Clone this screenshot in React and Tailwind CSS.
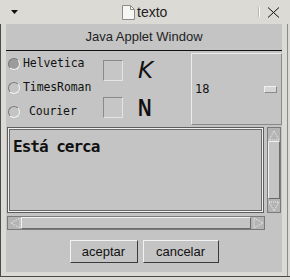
import React from "react";

// Java applet window inside a GTK-ish frame (290x280)

const mono = "font-['DejaVu_Sans_Mono','Liberation_Mono',monospace]";

function Radio({ label, selected, gap }) {
    return (
        <div className="h-[24px] flex items-center">
            <span
                className={`w-[12px] h-[12px] rounded-full border border-t-[#7a7a7a] border-l-[#7a7a7a] border-b-[#f2f2f2] border-r-[#f2f2f2] ${selected ? "bg-[#9c9c9c]" : "bg-[#c4c4c4]"}`}
            />
            <span className={`${mono} text-[11.5px] tracking-[-0.1px] text-[#111] leading-none`} style={{ marginLeft: gap }}>
                {label}
            </span>
        </div>
    );
}

function Box() {
    return (
        <div className="w-[20px] h-[21px] border border-t-[#8a8a8a] border-l-[#8a8a8a] border-b-[#e4e4e4] border-r-[#e4e4e4] bg-[#c6c6c6]" />
    );
}

function Arrow({ dir }) {
    const pts = {
        up: "6,2 11,11 1,11",
        down: "1,2 11,2 6,11",
        left: "2,6 11,1 11,11",
        right: "2,1 11,6 2,11",
    }[dir];
    return (
        <svg width="12" height="12" viewBox="0 0 12 12">
            <polygon points={pts} fill="none" stroke="#f4f4f4" strokeWidth="1" strokeDasharray="1 1" />
        </svg>
    );
}

function Btn({ children, w }) {
    return (
        <button
            className="h-[23px] border border-t-[#f2f2f2] border-l-[#f2f2f2] border-b-[#3a3a3a] border-r-[#3a3a3a] bg-[#c4c4c4] text-[13px] text-[#111] flex items-center justify-center"
            style={{ width: w }}
        >
            {children}
        </button>
    );
}

export default function App() {
    return (
        <div className="w-[290px] h-[280px] bg-[#dcdad5] overflow-hidden font-['Liberation_Sans',Arial,sans-serif] flex flex-col">
            {/* title bar */}
            <div className="h-[24px] flex items-center shrink-0">
                <svg className="ml-[11px]" width="7" height="4" viewBox="0 0 7 4">
                    <polygon points="0,0 7,0 3.5,4" fill="#111" />
                </svg>
                <svg className="ml-[103px]" width="15" height="17" viewBox="0 0 15 17">
                    <path d="M1.5 1.5h8l4 4v10h-12z" fill="#f6f6f4" stroke="#8c8c8c" />
                    <path d="M9.5 1.5v4h4" fill="none" stroke="#8c8c8c" />
                </svg>
                <span className="ml-[1px] text-[14px] text-[#222] leading-none">texto</span>
                <span className="ml-[91px] w-[2px] h-[10px] bg-[#fafafa] border-l border-[#b8b8b8]" />
                <svg className="ml-[7px]" width="13" height="11" viewBox="0 0 13 11">
                    <path d="M1 0.5l11 10M12 0.5l-11 10" stroke="#111" strokeWidth="1" />
                </svg>
            </div>

            <div className="flex h-[253px] border-l border-b border-[#4a4a4a]">
                <div className="ml-[5px] w-[276px] h-[248px] bg-[#c4c4c4] flex flex-col">
                    {/* applet header */}
                    <div className="h-[27px] shrink-0 flex items-center justify-center text-[13px] text-[#222] border-b border-[#111]">
                        Java Applet Window
                    </div>

                    {/* controls */}
                    <div className="h-[76px] shrink-0 flex">
                        <div className="w-[185px] flex">
                            <div className="w-[97px] pt-[1px] pl-[2px]">
                                <Radio label="Helvetica" selected gap={3} />
                                <Radio label="TimesRoman" gap={3} />
                                <Radio label="Courier" gap={9} />
                            </div>
                            <div className="pt-[9px] flex flex-col gap-[16px]">
                                <Box />
                                <Box />
                            </div>
                            <div className="pt-[9px] ml-[15px] flex flex-col gap-[16px]">
                                <div className="h-[21px] flex items-center text-[23px] italic text-[#111] leading-none font-['DejaVu_Sans',sans-serif] font-extralight">K</div>
                                <div className="h-[21px] flex items-center text-[24px] font-bold text-[#111] leading-none">
                                    <span className="inline-block scale-x-[0.78] origin-left">N</span>
                                </div>
                            </div>
                        </div>
                        <div className="mt-[2px] w-[91px] h-[72px] border border-t-[#ececec] border-l-[#ececec] border-b-[#8a8a8a] border-r-[#8a8a8a] flex items-center pl-[3px] pr-[4px]">
                            <span className={`${mono} text-[12px] text-[#111]`}>18</span>
                            <span className="ml-auto w-[13px] h-[7px] bg-[#d6d6d6] border border-[#8a8a8a] border-t-[#f0f0f0] border-l-[#f0f0f0]" />
                        </div>
                    </div>

                    {/* text area + vertical scrollbar */}
                    <div className="h-[86px] shrink-0 flex">
                        <div className="ml-[1px] w-[257px] h-[86px] border border-[#5e5e5e] p-[1px] bg-[#f0f0f0]">
                            <div className="w-full h-full border border-[#6a6a6a] bg-[#c4c4c4] pl-[3px] pt-[5px]">
                                <span className={`${mono} text-[16px] font-bold tracking-[-1px] text-[#111] leading-none`}>
                                    Está cerca
                                </span>
                            </div>
                        </div>
                        <div className="ml-[3px] w-[14px] h-[86px] bg-[#7a7a7a] p-[1px] flex flex-col">
                            <div className="h-[13px] flex items-center justify-center bg-[#b4b4b4]">
                                <Arrow dir="up" />
                            </div>
                            <div className="flex-1 border border-t-[#f0f0f0] border-l-[#f0f0f0] border-b-[#6a6a6a] border-r-[#6a6a6a] bg-[#c4c4c4]" />
                            <div className="h-[13px] flex items-center justify-center bg-[#b4b4b4]">
                                <Arrow dir="down" />
                            </div>
                        </div>
                    </div>

                    {/* horizontal scrollbar */}
                    <div className="mt-[3px] ml-[1px] w-[258px] h-[14px] shrink-0 bg-[#7a7a7a] p-[1px] flex">
                        <div className="w-[13px] flex items-center justify-center bg-[#b4b4b4]">
                            <Arrow dir="left" />
                        </div>
                        <div className="flex-1 border border-t-[#f0f0f0] border-l-[#f0f0f0] border-b-[#6a6a6a] border-r-[#6a6a6a] bg-[#c4c4c4]" />
                        <div className="w-[13px] flex items-center justify-center bg-[#b4b4b4]">
                            <Arrow dir="right" />
                        </div>
                    </div>

                    {/* buttons */}
                    <div className="mt-[10px] flex justify-center gap-[5px]">
                        <Btn w={68}>aceptar</Btn>
                        <Btn w={76}>cancelar</Btn>
                    </div>
                </div>
                <div className="ml-[5px] w-[1px] h-full bg-[#8a8a8a]" />
            </div>
        </div>
    );
}
